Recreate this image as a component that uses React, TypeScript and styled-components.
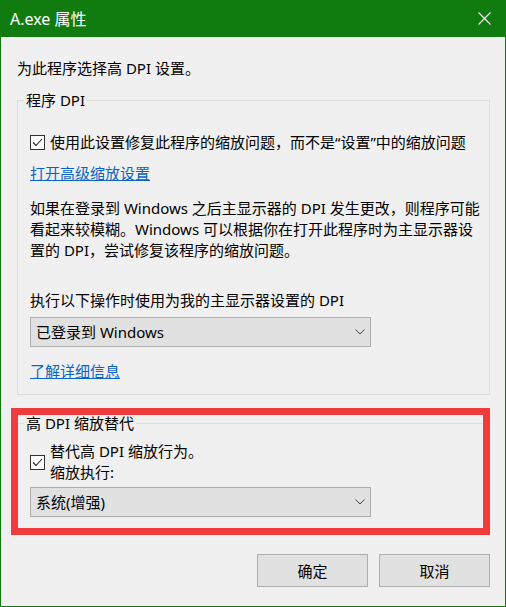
import React from "react";
import styled, { createGlobalStyle } from "styled-components";

const GlobalStyle = createGlobalStyle`
  html, body { margin: 0; padding: 0; background: #f0f0f0; }
  body { font-family: "Noto Sans", "Noto Sans CJK SC", sans-serif; }
`;

const Window = styled.div`
  position: relative;
  width: 506px;
  height: 607px;
  box-sizing: border-box;
  border: 1px solid #107c10;
  border-top: none;
  background: #f0f0f0;
  display: flex;
  flex-direction: column;
  font-family: "Noto Sans", "Noto Sans CJK SC", sans-serif;
  font-size: 15px;
  color: #000;
`;

const TitleBar = styled.div`
  height: 37px;
  flex: none;
  background: #107c10;
  color: #fff;
  display: flex;
  align-items: center;
  justify-content: space-between;
  padding-left: 9px;
`;

const Title = styled.span`
  font-size: 16px;
  line-height: 20px;
`;

const CloseButton = styled.div`
  width: 42px;
  height: 37px;
  display: flex;
  align-items: center;
  justify-content: center;
`;

const Body = styled.div`
  flex: 1;
  display: flex;
  flex-direction: column;
  padding: 21px 15px 0 16px;
`;

const Intro = styled.div`
  line-height: 20px;
`;

const Group = styled.fieldset<{ $mt: number; $pt: number; $pb: number }>`
  margin: ${(p) => p.$mt}px 0 0;
  padding: ${(p) => p.$pt}px 12px ${(p) => p.$pb}px;
  border: 1px solid #dcdcdc;
  min-width: 0;
  display: flex;
  flex-direction: column;
  align-items: flex-start;
`;

const Legend = styled.legend`
  padding: 0 2px;
  margin-left: -6px;
  line-height: 20px;
  font-size: 15px;
`;

const CheckRow = styled.div<{ $mt?: number }>`
  display: flex;
  align-items: center;
  gap: 5px;
  margin-top: ${(p) => p.$mt ?? 0}px;
`;

const Box = styled.span`
  width: 15px;
  height: 15px;
  box-sizing: border-box;
  border: 1px solid #333;
  background: #fff;
  display: flex;
  align-items: center;
  justify-content: center;
  flex: none;
`;

const CheckText = styled.span`
  line-height: 21px;
  white-space: nowrap;
`;

const Link = styled.a<{ $mt: number }>`
  margin-top: ${(p) => p.$mt}px;
  line-height: 20px;
  color: #0a64c8;
  text-decoration: underline;
  cursor: pointer;
`;

const Para = styled.p<{ $mt: number }>`
  margin: ${(p) => p.$mt}px 0 0;
  line-height: 21px;
  white-space: nowrap;
`;

const Label = styled.div<{ $mt: number }>`
  margin-top: ${(p) => p.$mt}px;
  line-height: 20px;
  white-space: nowrap;
`;

const Select = styled.div<{ $mt: number }>`
  margin-top: ${(p) => p.$mt}px;
  width: 341px;
  height: 30px;
  box-sizing: border-box;
  border: 1px solid #adadad;
  background: #e1e1e1;
  display: flex;
  align-items: center;
  justify-content: space-between;
  padding: 0 5px 0 5px;
  line-height: 20px;
`;

const ButtonRow = styled.div`
  margin-top: 24px;
  display: flex;
  justify-content: flex-end;
  gap: 11px;
`;

const Button = styled.button`
  width: 111px;
  height: 33px;
  box-sizing: border-box;
  border: 1px solid #adadad;
  background: #e1e1e1;
  font-family: "Noto Sans", "Noto Sans CJK SC", sans-serif;
  font-size: 15px;
  color: #000;
  padding: 0;
`;

const Highlight = styled.div`
  position: absolute;
  left: 10px;
  top: 408px;
  width: 479px;
  height: 127px;
  box-sizing: border-box;
  border: 7px solid #f03c3c;
  pointer-events: none;
`;

const Check = () => (
  <Box>
    <svg width="11" height="9" viewBox="0 0 11 9">
      <path d="M1 4.5 L4 7.5 L10 1" fill="none" stroke="#222" strokeWidth="1.1" />
    </svg>
  </Box>
);

const Chevron = () => (
  <svg width="10" height="6" viewBox="0 0 10 6">
    <path d="M0.5 0.5 L5 5 L9.5 0.5" fill="none" stroke="#444" strokeWidth="1" />
  </svg>
);

export default function App() {
  return (
    <>
      <GlobalStyle />
      <Window>
        <TitleBar>
          <Title>A.exe 属性</Title>
          <CloseButton>
            <svg width="13" height="13" viewBox="0 0 13 13">
              <path d="M0.5 0.5 L12.5 12.5 M12.5 0.5 L0.5 12.5" stroke="#fff" strokeWidth="1.1" />
            </svg>
          </CloseButton>
        </TitleBar>
        <Body>
          <Intro>为此程序选择高 DPI 设置。</Intro>
          <Group $mt={12} $pt={22} $pb={13}>
            <Legend>程序 DPI</Legend>
            <CheckRow>
              <Check />
              <CheckText>使用此设置修复此程序的缩放问题，而不是“设置”中的缩放问题</CheckText>
            </CheckRow>
            <Link $mt={10}>打开高级缩放设置</Link>
            <Para $mt={15}>
              如果在登录到 Windows 之后主显示器的 DPI 发生更改，则程序可能
              <br />
              看起来较模糊。Windows 可以根据你在打开此程序时为主显示器设
              <br />
              置的 DPI，尝试修复该程序的缩放问题。
            </Para>
            <Label $mt={29}>执行以下操作时使用为我的主显示器设置的 DPI</Label>
            <Select $mt={7}>
              <span>已登录到 Windows</span>
              <Chevron />
            </Select>
            <Link $mt={14}>了解详细信息</Link>
          </Group>
          <Group $mt={18} $pt={8} $pb={12}>
            <Legend>高 DPI 缩放替代</Legend>
            <CheckRow>
              <Check />
              <CheckText>
                替代高 DPI 缩放行为。
                <br />
                缩放执行:
              </CheckText>
            </CheckRow>
            <Select $mt={4}>
              <span>系统(增强)</span>
              <Chevron />
            </Select>
          </Group>
          <ButtonRow>
            <Button>确定</Button>
            <Button>取消</Button>
          </ButtonRow>
        </Body>
        <Highlight />
      </Window>
    </>
  );
}
